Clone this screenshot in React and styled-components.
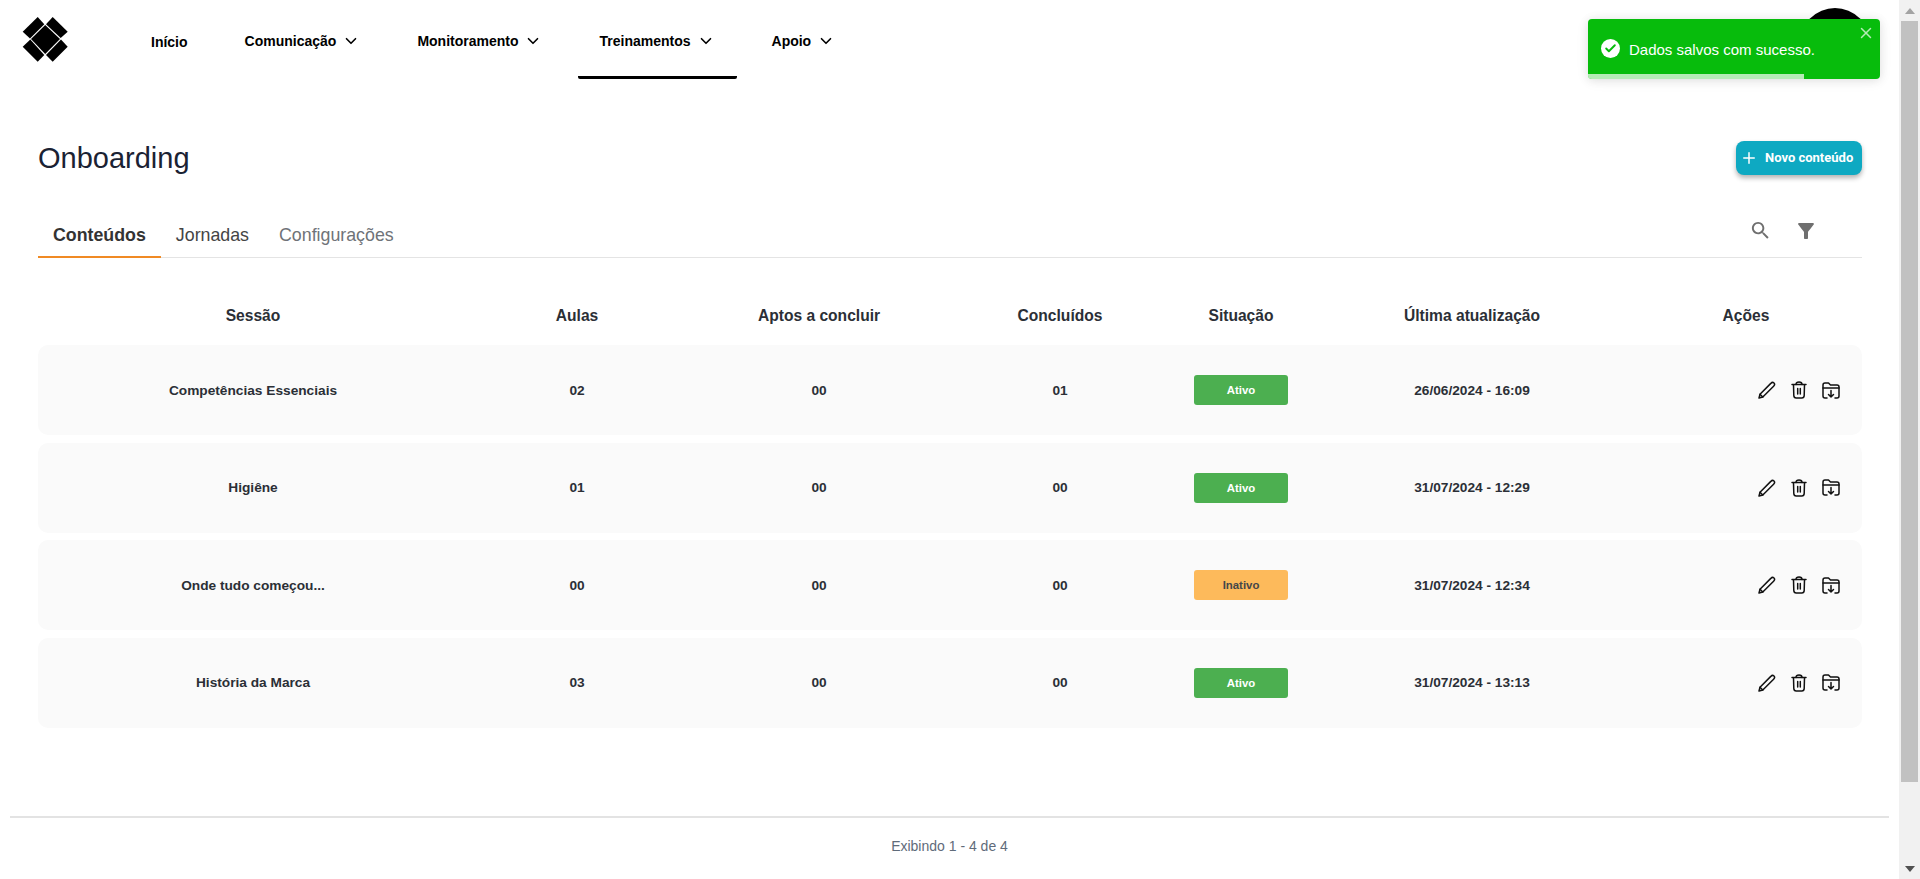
import React from "react";
import styled, { createGlobalStyle } from "styled-components";
import { Check, X, Plus, ChevronDown } from "lucide-react";

const Global = createGlobalStyle`
  html, body { margin: 0; padding: 0; height: 100%; overflow: hidden; background: #fff; }
  * { box-sizing: border-box; }
  body { font-family: "Liberation Sans", Arial, sans-serif; color: #212529; }
`;

const Shell = styled.div`
  display: flex;
  height: 879px;
  width: 1920px;
  overflow: hidden;
  position: relative;
`;

const Page = styled.div`
  flex: 1;
  min-width: 0;
  display: flex;
  flex-direction: column;
`;

const TopBar = styled.header`
  height: 79px;
  display: flex;
  align-items: flex-start;
  padding-left: 22px;
  position: relative;
`;

const LogoBox = styled.div`
  width: 46px;
  height: 45px;
  margin-top: 17px;
  margin-right: 62px;
`;

const Nav = styled.nav`
  display: flex;
  gap: 14px;
  height: 79px;
`;

const NavItem = styled.div`
  display: flex;
  align-items: center;
  gap: 6px;
  height: 79px;
  padding: ${(p) => (p.$plain ? 8 : 6)}px 22px 0 21px;
  font-size: 14px;
  font-weight: 700;
  color: #000;
  border-bottom: 3px solid ${(p) => (p.$active ? "#000" : "transparent")};
  border-radius: 0 0 2px 2px;
  white-space: nowrap;
`;

const Avatar = styled.div`
  position: absolute;
  left: 1800px;
  top: 8px;
  width: 70px;
  height: 70px;
  border-radius: 50%;
  background: #000;
`;

const Toast = styled.div`
  position: absolute;
  left: 1588px;
  top: 19px;
  width: 292px;
  height: 60px;
  background: #07bc0c;
  border-radius: 4px;
  color: #fff;
  display: flex;
  align-items: center;
  padding: 0 13px;
  gap: 9px;
  font-size: 15px;
  box-shadow: 0 1px 10px rgba(0, 0, 0, 0.1), 0 2px 15px rgba(0, 0, 0, 0.05);
  overflow: hidden;
  z-index: 5;
`;

const ToastIcon = styled.span`
  width: 19px;
  height: 19px;
  margin-top: -2px;
  border-radius: 50%;
  background: #fff;
  color: #07bc0c;
  display: flex;
  align-items: center;
  justify-content: center;
`;

const ToastClose = styled.span`
  position: absolute;
  right: 5px;
  top: 5px;
  color: #fff;
  opacity: 0.7;
  display: flex;
`;

const ToastProgress = styled.div`
  position: absolute;
  left: 0;
  bottom: 0;
  height: 5px;
  background: rgba(255, 255, 255, 0.7);
`;

const Content = styled.main`
  padding: 0 37px 0 38px;
  flex: 1;
  display: flex;
  flex-direction: column;
`;

const TitleRow = styled.div`
  display: flex;
  justify-content: space-between;
  align-items: flex-start;
  height: 136px;
  padding-top: 62px;
`;

const Title = styled.h1`
  margin: 0;
  font-size: 29px;
  line-height: 34px;
  font-weight: 400;
  color: #1a2233;
`;

const AddButton = styled.button`
  width: 126px;
  height: 34px;
  border: 0;
  border-radius: 8px;
  background: #0ea9c2;
  color: #fff;
  display: flex;
  align-items: center;
  padding: 0 0 1px 4px;
  gap: 7px;
  font-family: Roboto, sans-serif;
  font-size: 13px;
  font-weight: 700;
  box-shadow: 0 3px 5px rgba(0, 0, 0, 0.3);
`;

const TabsRow = styled.div`
  display: flex;
  justify-content: space-between;
  height: 43px;
  border-bottom: 1px solid #e4e4e4;
`;

const Tabs = styled.div`
  display: flex;
`;

const Tab = styled.div`
  height: 43px;
  padding: 0 15px;
  display: flex;
  align-items: center;
  font-size: 17.8px;
  font-weight: ${(p) => (p.$active ? 700 : 400)};
  color: ${(p) => p.$color};
  border-bottom: 2px solid ${(p) => (p.$active ? "#f08a24" : "transparent")};
`;

const Tools = styled.div`
  display: flex;
  gap: 22px;
  padding: 4px 44px 0 0;
  color: #6f6f6f;
`;

const ToolIcon = styled.span`
  display: flex;
  width: ${(p) => p.$size}px;
  height: ${(p) => p.$size}px;
`;

const Columns = "430px 218px 266px 216px 146px 316px 232px";

const HeadRow = styled.div`
  display: grid;
  grid-template-columns: ${Columns};
  height: 87px;
  align-items: center;
  padding-top: 29px;
  font-size: 15.6px;
  font-weight: 700;
  text-align: center;
  color: #2b2f36;
`;

const Rows = styled.div`
  display: flex;
  flex-direction: column;
  gap: 7.5px;
`;

const Row = styled.div`
  display: grid;
  grid-template-columns: ${Columns};
  height: 90px;
  align-items: center;
  background: #fafafa;
  border-radius: 10px;
  font-size: 13.7px;
  font-weight: 700;
  text-align: center;
  color: #2b2f36;
`;

const Cell = styled.div`
  display: flex;
  justify-content: center;
  align-items: center;
`;

const Badge = styled.span`
  width: 94px;
  height: 30px;
  border-radius: 3px;
  background: ${(p) => (p.$active ? "#4caf50" : "#fdba5b")};
  color: ${(p) => (p.$active ? "#fff" : "#45474a")};
  font-size: 11.4px;
  font-weight: 700;
  display: flex;
  align-items: center;
  justify-content: center;
`;

const Actions = styled.div`
  display: flex;
  justify-content: flex-end;
  align-items: center;
  gap: 15px;
  padding-right: 22px;
  color: #111;
`;

const Footer = styled.footer`
  margin: auto 10px 0 10px;
  height: 63px;
  padding-bottom: 5px;
  border-top: 2px solid #e3e3e3;
  display: flex;
  align-items: center;
  justify-content: center;
  font-size: 14px;
  color: #5f6b7a;
`;

const ScrollRail = styled.div`
  width: 21px;
  background: #f1f1f1;
  display: flex;
  flex-direction: column;
  align-items: center;
`;

const ScrollArrow = styled.div`
  height: 21px;
  display: flex;
  align-items: center;
  justify-content: center;
  flex: none;
`;

const ScrollThumb = styled.div`
  width: 17px;
  height: 761px;
  background: #c1c1c1;
`;

const Spacer = styled.div`
  flex: 1;
`;

const Logo = () => (
  <svg viewBox="0 0 46 45" width="46" height="45" fill="#000">
    <polygon points="15.7,0 22.3,7.2 8,21.6 0.7,14.7" />
    <polygon points="30.7,0 45.7,14.7 38.7,21 24,7.3" />
    <polygon points="23.2,8 38,22 23.2,37 9,22" />
    <polygon points="0.7,29.7 8.3,22.6 22.3,38 15.7,44.7" />
    <polygon points="39,22.6 45.7,29.7 30.7,44.7 24,38" />
  </svg>
);

const Pencil = () => (
  <svg width="18" height="18" viewBox="0 0 18 18" fill="none" stroke="currentColor" strokeWidth="1.5" strokeLinejoin="round" strokeLinecap="round">
    <path d="M1 17 L2 13.2 L12.8 2.4 C13.8 1.3 15 1.1 16 2 C17 3 16.7 4.1 15.6 5.2 L4.8 16 Z" />
    <path d="M2 13.2 L4.8 16" />
  </svg>
);

const Trash = () => (
  <svg width="16" height="18" viewBox="0 0 16 18" fill="none" stroke="currentColor" strokeWidth="1.5" strokeLinejoin="round" strokeLinecap="round">
    <path d="M1 3.6 H15" />
    <path d="M5 3.4 C5 1.6 6 1 8 1 C10 1 11 1.6 11 3.4" />
    <path d="M2.5 3.8 L2.8 14.5 C2.9 16 3.9 17 5.2 17 H10.8 C12.1 17 13.1 16 13.2 14.5 L13.5 3.8" />
    <path d="M6.7 7.5 V13 M9.3 7.5 V13" />
  </svg>
);

const FolderDown = () => (
  <svg width="18" height="17" viewBox="0 0 18 17" fill="none" stroke="currentColor" strokeWidth="1.5" strokeLinejoin="round" strokeLinecap="round">
    <path d="M5 16 H3 C1.8 16 1 15.2 1 14 V3 C1 1.8 1.8 1 3 1 H6.5 L8.5 3 H15 C16.2 3 17 3.8 17 5 V14 C17 15.2 16.2 16 15 16 H13" />
    <path d="M1 6 H17" />
    <path d="M9 8.5 V15 M6.5 12.5 L9 15 L11.5 12.5" />
  </svg>
);

const SearchIcon = () => (
  <svg viewBox="0 0 24 24" width="23" height="23" fill="currentColor">
    <path d="M15.5 14h-.79l-.28-.27C15.41 12.59 16 11.11 16 9.5 16 5.91 13.09 3 9.5 3S3 5.91 3 9.5 5.91 16 9.5 16c1.61 0 3.09-.59 4.23-1.57l.27.28v.79l5 4.99L20.49 19l-4.99-5zm-6 0C7.01 14 5 11.99 5 9.5S7.01 5 9.5 5 14 7.01 14 9.5 11.99 14 9.5 14z" />
  </svg>
);

const Funnel = () => (
  <svg viewBox="0 0 24 24" width="24" height="24" fill="currentColor">
    <path d="M4.25 5.61C6.27 8.2 10 13 10 13v6c0 .55.45 1 1 1h2c.55 0 1-.45 1-1v-6s3.72-4.8 5.74-7.39C20.25 4.95 19.78 4 18.95 4H5.04c-.83 0-1.3.95-.79 1.61z" />
  </svg>
);

const data = [
  ["Competências Essenciais", "02", "00", "01", true, "26/06/2024 - 16:09"],
  ["Higiêne", "01", "00", "00", true, "31/07/2024 - 12:29"],
  ["Onde tudo começou...", "00", "00", "00", false, "31/07/2024 - 12:34"],
  ["História da Marca", "03", "00", "00", true, "31/07/2024 - 13:13"],
];

const navItems = [
  { label: "Início", plain: true },
  { label: "Comunicação" },
  { label: "Monitoramento" },
  { label: "Treinamentos", active: true },
  { label: "Apoio" },
];

export default function App() {
  return (
    <Shell>
      <Global />
      <Page>
        <TopBar>
          <LogoBox>
            <Logo />
          </LogoBox>
          <Nav>
            {navItems.map((n) => (
              <NavItem key={n.label} $active={n.active} $plain={n.plain}>
                {n.label}
                {!n.plain && <ChevronDown size={18} strokeWidth={2.2} />}
              </NavItem>
            ))}
          </Nav>
          <Avatar />
        </TopBar>
        <Toast>
          <ToastIcon>
            <Check size={13} strokeWidth={3.5} />
          </ToastIcon>
          Dados salvos com sucesso.
          <ToastClose>
            <X size={18} strokeWidth={2} />
          </ToastClose>
          <ToastProgress style={{ width: "74%" }} />
        </Toast>
        <Content>
          <TitleRow>
            <Title>Onboarding</Title>
            <AddButton>
              <Plus size={18} strokeWidth={2} />
              Novo conteúdo
            </AddButton>
          </TitleRow>
          <TabsRow>
            <Tabs>
              <Tab $active $color="#333">Conteúdos</Tab>
              <Tab $color="#444">Jornadas</Tab>
              <Tab $color="#6f7378">Configurações</Tab>
            </Tabs>
            <Tools>
              <ToolIcon $size={23}><SearchIcon /></ToolIcon>
              <ToolIcon $size={24}><Funnel /></ToolIcon>
            </Tools>
          </TabsRow>
          <HeadRow>
            <div>Sessão</div>
            <div>Aulas</div>
            <div>Aptos a concluir</div>
            <div>Concluídos</div>
            <div>Situação</div>
            <div>Última atualização</div>
            <div>Ações</div>
          </HeadRow>
          <Rows>
            {data.map((r) => (
              <Row key={r[0]}>
                <div>{r[0]}</div>
                <div>{r[1]}</div>
                <div>{r[2]}</div>
                <div>{r[3]}</div>
                <Cell><Badge $active={r[4]}>{r[4] ? "Ativo" : "Inativo"}</Badge></Cell>
                <div>{r[5]}</div>
                <Actions>
                  <Pencil />
                  <Trash />
                  <FolderDown />
                </Actions>
              </Row>
            ))}
          </Rows>
        </Content>
        <Footer>Exibindo 1 - 4 de 4</Footer>
      </Page>
      <ScrollRail>
        <ScrollArrow>
          <svg width="10" height="6" viewBox="0 0 10 6"><path d="M5 0 L10 6 H0 Z" fill="#a3a3a3" /></svg>
        </ScrollArrow>
        <ScrollThumb />
        <Spacer />
        <ScrollArrow>
          <svg width="10" height="6" viewBox="0 0 10 6"><path d="M0 0 H10 L5 6 Z" fill="#505050" /></svg>
        </ScrollArrow>
      </ScrollRail>
    </Shell>
  );
}
